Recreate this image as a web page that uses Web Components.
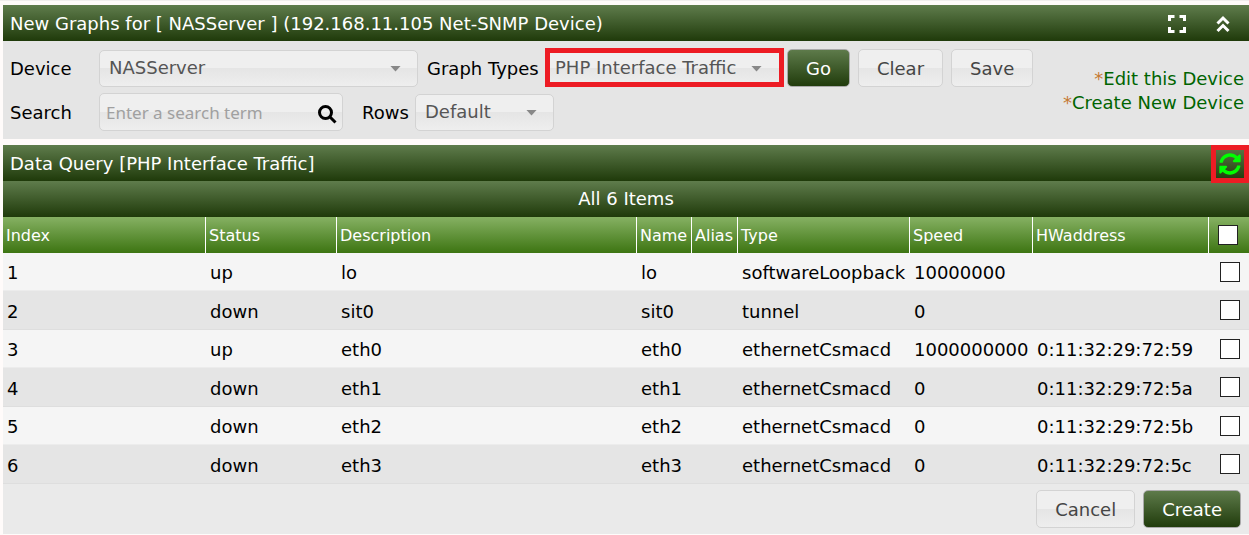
<!DOCTYPE html>
<html lang="en">
<head>
<meta charset="utf-8">
<title>New Graphs</title>
<style>
  body {
    margin: 0;
    background: #fffbfa;
    border-top: 1px solid #f0eeed;
    font: 18px/24px "DejaVu Sans", Verdana, sans-serif;
    color: #000;
    --bar: linear-gradient(#5f7c4c, #1f3a0a);
    --soft: linear-gradient(#efefef 50%, #e5e5e5 50%, #eee);
  }
</style>
</head>
<body>
<graphs-page></graphs-page>
<script>
class Base extends HTMLElement {
  render(html) {
    this.attachShadow({ mode: 'open' }).innerHTML = '<style>*{box-sizing:border-box}:host{box-sizing:border-box}</style>' + html;
  }
}

customElements.define('title-bar', class extends Base {
  connectedCallback() {
    this.render(`
      <style>
        :host { display: flex; position: relative; align-items: center; height: 36px; padding: 2px 7px 0;
          background: var(--bar); color: #fff; }
        .title { flex: 1; }
        ::slotted(*) { flex: none; }
      </style>
      <div class="title"><slot></slot></div><slot name="tools"></slot>`);
  }
});

customElements.define('icon-button', class extends Base {
  connectedCallback() {
    const icons = {
      expand: '<svg width="18" height="18" viewBox="0 0 18 18" fill="none" stroke="#fff" stroke-width="3"><path d="M1.5 6V1.5H6.5M11.5 1.5h5V6M16.5 12v4.5h-5M6.5 16.5h-5V12"/></svg>',
      up: '<svg width="14" height="18" viewBox="0 0 14 18" fill="none" stroke="#fff" stroke-width="3"><path d="M1.5 8.5L7 3l5.500 5.500M1.500 16L7 10.500l5.500 5.500"/></svg>',
      refresh: '<svg width="22" height="22" viewBox="0 0 512 512" fill="#0f0"><path d="M370.720 133.280C339.458 104.008 298.888 87.962 255.848 88c-77.458.068-144.328 53.178-162.791 126.850-1.344 5.363-6.122 9.150-11.651 9.150H24.103c-7.498 0-13.194-6.807-11.807-14.176C33.933 94.924 134.813 8 256 8c66.448 0 126.791 26.136 171.315 68.685L463.030 40.970C478.149 25.851 504 36.559 504 57.941V192c0 13.255-10.745 24-24 24H345.941c-21.382 0-32.090-25.851-16.971-40.971l41.750-41.749zM32 296h134.059c21.382 0 32.090 25.851 16.971 40.971l-41.750 41.750c31.262 29.273 71.835 45.319 114.876 45.280 77.418-.070 144.315-53.144 162.787-126.849 1.344-5.363 6.122-9.150 11.651-9.150h57.304c7.498 0 13.194 6.807 11.807 14.176C478.067 417.076 377.187 504 256 504c-66.448 0-126.791-26.136-171.315-68.685L48.970 471.030C33.851 486.149 8 475.441 8 454.059V320c0-13.255 10.745-24 24-24z"/></svg>'
    };
    this.render(`
      <style>
        :host { display: block; }
        button { display: flex; align-items: center; justify-content: center; width: 38px; height: 38px;
          padding: 0; border: 0; background: none; cursor: pointer; }
        :host([marked]) button { border: 5px solid #ed1c24; }
      </style>
      <button type="button" aria-label="${this.getAttribute('label')}">${icons[this.getAttribute('icon')]}</button>`);
  }
});

customElements.define('ui-button', class extends Base {
  connectedCallback() {
    this.render(`
      <style>
        :host { display: block; }
        button { display: block; height: 38px; padding: 2px 18px 0; font: inherit; color: #454545; cursor: pointer;
          border: 1px solid #d3d3d3; border-radius: 5px; background: var(--soft); }
        :host([primary]) button { color: #fff; background: var(--bar) border-box; border-color: #aaa; }
      </style>
      <button type="button"><slot></slot></button>`);
  }
});

customElements.define('select-field', class extends Base {
  connectedCallback() {
    this.render(`
      <style>
        :host { display: flex; align-items: center; }
        label { width: var(--label-width, auto); padding-top: 2px; white-space: nowrap; }
        .box { position: relative; width: var(--control-width); }
        select { display: block; appearance: none; width: 100%; height: 37px; padding: 0 9px; font: inherit;
          color: #555; border: 1px solid #d3d3d3; border-radius: 5px; background: var(--soft); }
        .box::before { content: ""; position: absolute; right: var(--arrow, 17px); top: 16px; width: 11px; height: 6px;
          background: #888; clip-path: polygon(0 0, 100% 0, 50% 100%); pointer-events: none; }
        :host([marked]) .box::after { content: ""; position: absolute; inset: -2px 0 0; border: 5px solid #ed1c24; pointer-events: none; }
      </style>
      <label for="s">${this.getAttribute('label')}</label>
      <div class="box"><select id="s"><option>${this.getAttribute('value')}</option></select></div>`);
  }
});

customElements.define('search-field', class extends Base {
  connectedCallback() {
    this.render(`
      <style>
        :host { display: flex; align-items: center; }
        label { width: var(--label-width, auto); padding-top: 2px; }
        .box { position: relative; width: var(--control-width); }
        input { display: block; width: 100%; height: 38px; padding: 0 36px 0 6px; border: 1px solid #d3d3d3;
          border-radius: 5px; background: var(--soft); font: 17px "Noto Sans", sans-serif; }
        input::placeholder { color: #a0a0a0; opacity: 1; }
        svg { position: absolute; right: 6px; top: 12px; }
      </style>
      <label for="q">Search</label>
      <div class="box"><input id="q" type="text" placeholder="Enter a search term">
        <svg width="19" height="19" viewBox="0 0 19 19" fill="none" stroke="#000" stroke-width="3"><circle cx="7.500" cy="7.500" r="6"/><path d="M12 12l5.500 5.500"/></svg></div>`);
  }
});

customElements.define('filter-panel', class extends Base {
  connectedCallback() {
    this.render(`
      <style>
        :host { display: flex; justify-content: space-between; align-items: center; padding: 8px 5px 8px 7px; background: #e5e5e5; }
        form { display: grid; gap: 6px; margin: 0; }
        .row { display: flex; align-items: center; gap: 9px; }
        .first { --label-width: 89px; }
        .buttons { display: flex; gap: 8px; margin-left: -6px; }
        .search { gap: 19px; }
        .links { padding-top: 2px; text-align: right; white-space: nowrap; }
        .links div { color: #c67a33; }
        a { color: #006400; text-decoration: none; }
      </style>
      <form>
        <div class="row">
          <select-field class="first" label="Device" value="NASServer" style="--control-width:319px"></select-field>
          <select-field marked label="Graph Types" value="PHP Interface Traffic" style="--label-width:118px;--control-width:239px;--arrow:22px"></select-field>
          <div class="buttons"><ui-button primary>Go</ui-button><ui-button>Clear</ui-button><ui-button>Save</ui-button></div>
        </div>
        <div class="row search">
          <search-field class="first" style="--control-width:244px"></search-field>
          <select-field label="Rows" value="Default" style="--label-width:53px;--control-width:139px"></select-field>
        </div>
      </form>
      <div class="links">
        <div>*<a href="#edit">Edit this Device</a></div>
        <div>*<a href="#new">Create New Device</a></div>
      </div>`);
  }
});

customElements.define('interface-table', class extends Base {
  connectedCallback() {
    const heads = ['Index', 'Status', 'Description', 'Name', 'Alias', 'Type', 'Speed', 'HWaddress'];
    const widths = ['202px', '131px', 'auto', '55px', '46px', '172px', '123px', '176px', '41px'];
    const rows = [
      [1, 'up', 'lo', 'lo', '', 'softwareLoopback', '10000000', ''],
      [2, 'down', 'sit0', 'sit0', '', 'tunnel', '0', ''],
      [3, 'up', 'eth0', 'eth0', '', 'ethernetCsmacd', '1000000000', '0:11:32:29:72:59'],
      [4, 'down', 'eth1', 'eth1', '', 'ethernetCsmacd', '0', '0:11:32:29:72:5a'],
      [5, 'down', 'eth2', 'eth2', '', 'ethernetCsmacd', '0', '0:11:32:29:72:5b'],
      [6, 'down', 'eth3', 'eth3', '', 'ethernetCsmacd', '0', '0:11:32:29:72:5c']
    ];
    this.render(`
      <style>
        :host { display: block; }
        table { width: 100%; table-layout: fixed; border-collapse: separate; border-spacing: 0; }
        thead tr { height: 36px; background: linear-gradient(#86b163, #3d7512); }
        th { padding: 2px 0 0 3px; text-align: left; font-weight: normal; font-size: 16px; color: #fff; white-space: nowrap; }
        th + th { border-left: 1px solid #fff; }
        td { padding: 3px 0 0 5px; white-space: nowrap; border-bottom: 1px solid #ececec; }
        td:first-child { padding-left: 4px; }
        tbody tr { height: 38px; background: #f5f5f5; }
        tbody tr:nth-child(even) { height: 39px; background: #e5e5e5; }
        tbody tr:nth-child(even) td { border-color: #dedede; }
        th:last-child { padding: 0 0 0 9px; }
        td:last-child { padding: 0 0 0 12px; }
        input { display: block; appearance: none; width: 20px; height: 20px; margin: 0; border: 1px solid #222; background: #fff; }
      </style>
      <table>
        <colgroup>${widths.map(w => `<col style="width:${w}">`).join('')}</colgroup>
        <thead><tr>${heads.map(h => `<th scope="col">${h}</th>`).join('')}<th><input type="checkbox" aria-label="Select all"></th></tr></thead>
        <tbody>${rows.map(r => `<tr>${r.map(c => `<td>${c}</td>`).join('')}<td><input type="checkbox" aria-label="Select ${r[0]}"></td></tr>`).join('')}</tbody>
      </table>`);
  }
});

customElements.define('graphs-page', class extends Base {
  connectedCallback() {
    this.render(`
      <style>
        :host { display: block; padding: 4px 0 1px 3px; }
        section + section { margin-top: 6px; }
        .tools { display: flex; gap: 8px; }
        .corner { position: absolute; top: 0; right: 0; }
        .count { display: flex; align-items: center; justify-content: center; height: 36px; background: var(--bar); color: #fff; }
        .actions { display: flex; justify-content: flex-end; gap: 8px; padding: 6px 8px; background: #eaeaea; }
      </style>
      <section>
        <title-bar>New Graphs for [ NASServer ] (192.168.11.105 Net-SNMP Device)
          <div class="tools" slot="tools"><icon-button icon="expand" label="Full screen"></icon-button><icon-button icon="up" label="Collapse"></icon-button></div>
        </title-bar>
        <filter-panel></filter-panel>
      </section>
      <section>
        <title-bar>Data Query [PHP Interface Traffic]
          <icon-button class="corner" slot="tools" marked icon="refresh" label="Reload"></icon-button>
        </title-bar>
        <div class="count">All 6 Items</div>
        <interface-table></interface-table>
        <div class="actions"><ui-button>Cancel</ui-button><ui-button primary>Create</ui-button></div>
      </section>`);
  }
});
</script>
</body>
</html>
